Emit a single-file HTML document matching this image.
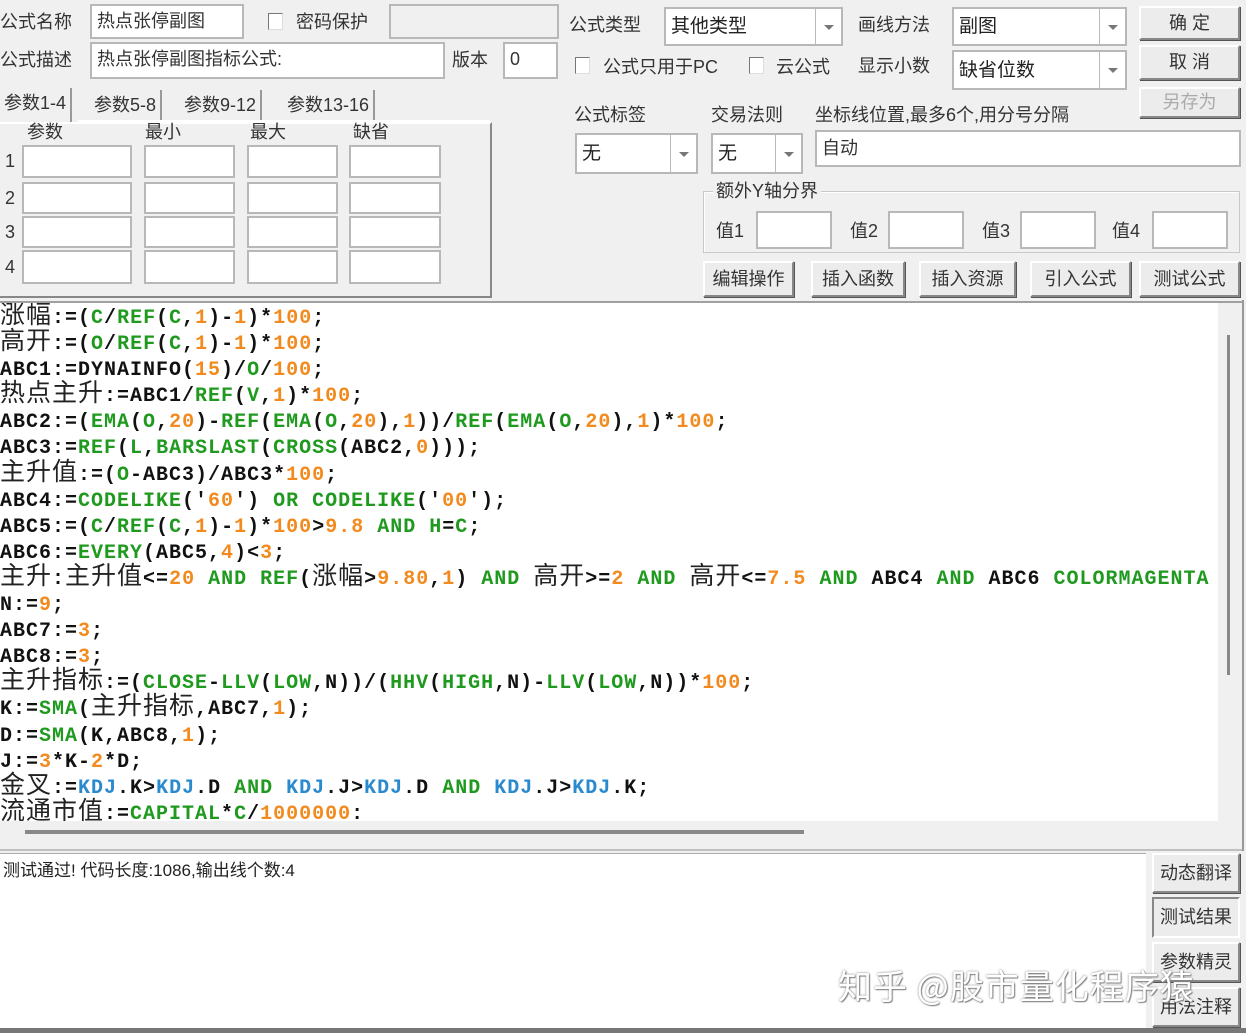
<!DOCTYPE html>
<html><head><meta charset="utf-8">
<style>
*{margin:0;padding:0;box-sizing:border-box}
body{width:1246px;height:1033px;background:#f0f0f0;position:relative;overflow:hidden;font-family:"Liberation Sans","Noto Sans CJK SC",sans-serif;color:#222}
.a{position:absolute}
.l{position:absolute;font-size:18px;line-height:22px;white-space:nowrap;color:#333}
.in{position:absolute;background:#fff;border:2px solid #b8b8b8;font-size:18px;line-height:30px;padding-left:5px;white-space:nowrap;color:#333;overflow:hidden}
.dis{background:#f0f0f0}
.cb{position:absolute;width:15px;height:17px;border:1px solid #777;border-right-color:#ddd;border-bottom-color:#ddd;background:#fff}
.sel{position:absolute;background:#fff;border:2px solid #b8b8b8;font-size:19px;padding-left:5px;white-space:nowrap;color:#222}
.sel .dd{position:absolute;right:0;top:0;bottom:0;width:26px;border-left:1px solid #bbb}
.sel .dd:after{content:"";position:absolute;left:8px;top:50%;margin-top:-2px;border-left:5px solid transparent;border-right:5px solid transparent;border-top:5px solid #777}
.btn{position:absolute;background:#ececec;border:2px solid #888;border-top-color:#fff;border-left-color:#fff;box-shadow:1px 1px 0 #555;font-size:18px;text-align:center;color:#333;white-space:nowrap}
.tab{position:absolute;font-size:18px;top:90px;height:32px;line-height:30px;padding:0 4px;border-right:2px solid #999;color:#333}
#code{position:absolute;left:0;top:303px;width:1218px;height:518px;background:#fff;overflow:hidden;font-family:"Liberation Mono",monospace;font-weight:bold;font-size:20px;letter-spacing:1px;color:#111;padding-top:3px}
#code div{height:26.1px;line-height:26.1px;white-space:nowrap;overflow:visible}
.c{font-family:"Noto Sans CJK SC",sans-serif;font-weight:normal;font-size:25px;line-height:10px;color:#222}
.g{color:#1f9a1f}.o{color:#f28a1e}.b{color:#2a8ad0}
</style></head><body>

<div class="l" style="left:0;top:11px">公式名称</div>
<div class="in" style="left:90px;top:4px;width:154px;height:35px">热点张停副图</div>
<div class="cb" style="left:268px;top:13px"></div>
<div class="l" style="left:296px;top:11px">密码保护</div>
<div class="in dis" style="left:389px;top:4px;width:170px;height:35px"></div>
<div class="l" style="left:0;top:49px">公式描述</div>
<div class="in" style="left:90px;top:42px;width:355px;height:37px">热点张停副图指标公式:</div>
<div class="l" style="left:452px;top:49px">版本</div>
<div class="in" style="left:503px;top:42px;width:55px;height:37px">0</div>

<div class="tab" style="left:0;top:88px;height:34px;border-left:0">参数1-4</div>
<div class="tab" style="left:90px">参数5-8</div>
<div class="tab" style="left:180px">参数9-12</div>
<div class="tab" style="left:283px">参数13-16</div>
<div class="a" style="left:-2px;top:122px;width:494px;height:176px;border:2px solid #fff;border-right-color:#888;border-bottom-color:#888;border-left:0"></div>
<div class="a" style="left:78px;top:120px;width:412px;height:2px;background:#fff"></div>
<div class="l" style="left:27px;top:121px">参数</div>
<div class="l" style="left:145px;top:121px">最小</div>
<div class="l" style="left:250px;top:121px">最大</div>
<div class="l" style="left:353px;top:121px">缺省</div>
<div class="l" style="left:5px;top:150px">1</div>
<div class="l" style="left:5px;top:187px">2</div>
<div class="l" style="left:5px;top:221px">3</div>
<div class="l" style="left:5px;top:256px">4</div>
<div class="in" style="left:22px;top:145px;width:110px;height:33px"></div><div class="in" style="left:144px;top:145px;width:91px;height:33px"></div><div class="in" style="left:247px;top:145px;width:91px;height:33px"></div><div class="in" style="left:349px;top:145px;width:92px;height:33px"></div>
<div class="in" style="left:22px;top:182px;width:110px;height:32px"></div><div class="in" style="left:144px;top:182px;width:91px;height:32px"></div><div class="in" style="left:247px;top:182px;width:91px;height:32px"></div><div class="in" style="left:349px;top:182px;width:92px;height:32px"></div>
<div class="in" style="left:22px;top:216px;width:110px;height:32px"></div><div class="in" style="left:144px;top:216px;width:91px;height:32px"></div><div class="in" style="left:247px;top:216px;width:91px;height:32px"></div><div class="in" style="left:349px;top:216px;width:92px;height:32px"></div>
<div class="in" style="left:22px;top:250px;width:110px;height:34px"></div><div class="in" style="left:144px;top:250px;width:91px;height:34px"></div><div class="in" style="left:247px;top:250px;width:91px;height:34px"></div><div class="in" style="left:349px;top:250px;width:92px;height:34px"></div>

<div class="l" style="left:569px;top:14px">公式类型</div>
<div class="sel" style="left:664px;top:7px;width:179px;height:39px;line-height:35px">其他类型<div class="dd"></div></div>
<div class="l" style="left:858px;top:14px">画线方法</div>
<div class="sel" style="left:952px;top:7px;width:175px;height:39px;line-height:35px">副图<div class="dd"></div></div>
<div class="btn" style="left:1139px;top:6px;width:101px;height:34px;line-height:30px">确 定</div>
<div class="btn" style="left:1139px;top:45px;width:101px;height:35px;line-height:31px">取 消</div>
<div class="btn" style="left:1139px;top:87px;width:101px;height:31px;line-height:27px;color:#aaa">另存为</div>
<div class="cb" style="left:575px;top:57px"></div>
<div class="l" style="left:603px;top:56px">公式只用于PC</div>
<div class="cb" style="left:749px;top:57px"></div>
<div class="l" style="left:776px;top:56px">云公式</div>
<div class="l" style="left:858px;top:55px">显示小数</div>
<div class="sel" style="left:952px;top:50px;width:175px;height:40px;line-height:38px">缺省位数<div class="dd"></div></div>
<div class="l" style="left:574px;top:104px">公式标签</div>
<div class="l" style="left:711px;top:104px">交易法则</div>
<div class="l" style="left:815px;top:104px">坐标线位置,最多6个,用分号分隔</div>
<div class="sel" style="left:575px;top:133px;width:123px;height:41px;line-height:38px">无<div class="dd"></div></div>
<div class="sel" style="left:711px;top:133px;width:92px;height:41px;line-height:38px">无<div class="dd"></div></div>
<div class="in" style="left:815px;top:130px;width:426px;height:37px;line-height:33px">自动</div>
<div class="a" style="left:703px;top:191px;width:537px;height:62px;border:1px solid #c8c8c8;box-shadow:1px 1px 0 #fff inset"></div>
<div class="l" style="left:713px;top:180px;background:#f0f0f0;padding:0 3px">额外Y轴分界</div>
<div class="l" style="left:716px;top:220px">值1</div><div class="in" style="left:756px;top:211px;width:76px;height:38px"></div>
<div class="l" style="left:850px;top:220px">值2</div><div class="in" style="left:888px;top:211px;width:76px;height:38px"></div>
<div class="l" style="left:982px;top:220px">值3</div><div class="in" style="left:1020px;top:211px;width:76px;height:38px"></div>
<div class="l" style="left:1112px;top:220px">值4</div><div class="in" style="left:1152px;top:211px;width:76px;height:38px"></div>
<div class="btn" style="left:703px;top:261px;width:91px;height:36px;line-height:32px">编辑操作</div>
<div class="btn" style="left:811px;top:261px;width:94px;height:36px;line-height:32px">插入函数</div>
<div class="btn" style="left:919px;top:261px;width:97px;height:36px;line-height:32px">插入资源</div>
<div class="btn" style="left:1030px;top:261px;width:101px;height:36px;line-height:32px">引入公式</div>
<div class="btn" style="left:1139px;top:261px;width:101px;height:36px;line-height:32px">测试公式</div>

<div class="a" style="left:0;top:301px;width:1242px;height:2px;background:#a0a0a0"></div>
<div id="code">
<div><span class="c">涨幅</span>:=(<span class="g">C</span>/<span class="g">REF</span>(<span class="g">C</span>,<span class="o">1</span>)-<span class="o">1</span>)*<span class="o">100</span>;</div>
<div><span class="c">高开</span>:=(<span class="g">O</span>/<span class="g">REF</span>(<span class="g">C</span>,<span class="o">1</span>)-<span class="o">1</span>)*<span class="o">100</span>;</div>
<div>ABC1:=DYNAINFO(<span class="o">15</span>)/<span class="g">O</span>/<span class="o">100</span>;</div>
<div><span class="c">热点主升</span>:=ABC1/<span class="g">REF</span>(<span class="g">V</span>,<span class="o">1</span>)*<span class="o">100</span>;</div>
<div>ABC2:=(<span class="g">EMA</span>(<span class="g">O</span>,<span class="o">20</span>)-<span class="g">REF</span>(<span class="g">EMA</span>(<span class="g">O</span>,<span class="o">20</span>),<span class="o">1</span>))/<span class="g">REF</span>(<span class="g">EMA</span>(<span class="g">O</span>,<span class="o">20</span>),<span class="o">1</span>)*<span class="o">100</span>;</div>
<div>ABC3:=<span class="g">REF</span>(<span class="g">L</span>,<span class="g">BARSLAST</span>(<span class="g">CROSS</span>(ABC2,<span class="o">0</span>)));</div>
<div><span class="c">主升值</span>:=(<span class="g">O</span>-ABC3)/ABC3*<span class="o">100</span>;</div>
<div>ABC4:=<span class="g">CODELIKE</span>('<span class="o">60</span>') <span class="g">OR</span> <span class="g">CODELIKE</span>('<span class="o">00</span>');</div>
<div>ABC5:=(<span class="g">C</span>/<span class="g">REF</span>(<span class="g">C</span>,<span class="o">1</span>)-<span class="o">1</span>)*<span class="o">100</span>&gt;<span class="o">9.8</span> <span class="g">AND</span> <span class="g">H</span>=<span class="g">C</span>;</div>
<div>ABC6:=<span class="g">EVERY</span>(ABC5,<span class="o">4</span>)&lt;<span class="o">3</span>;</div>
<div><span class="c">主升</span>:<span class="c">主升值</span>&lt;=<span class="o">20</span> <span class="g">AND</span> <span class="g">REF</span>(<span class="c">涨幅</span>&gt;<span class="o">9.80</span>,<span class="o">1</span>) <span class="g">AND</span> <span class="c">高开</span>&gt;=<span class="o">2</span> <span class="g">AND</span> <span class="c">高开</span>&lt;=<span class="o">7.5</span> <span class="g">AND</span> ABC4 <span class="g">AND</span> ABC6 <span class="g">COLORMAGENTA</span></div>
<div>N:=<span class="o">9</span>;</div>
<div>ABC7:=<span class="o">3</span>;</div>
<div>ABC8:=<span class="o">3</span>;</div>
<div><span class="c">主升指标</span>:=(<span class="g">CLOSE</span>-<span class="g">LLV</span>(<span class="g">LOW</span>,N))/(<span class="g">HHV</span>(<span class="g">HIGH</span>,N)-<span class="g">LLV</span>(<span class="g">LOW</span>,N))*<span class="o">100</span>;</div>
<div>K:=<span class="g">SMA</span>(<span class="c">主升指标</span>,ABC7,<span class="o">1</span>);</div>
<div>D:=<span class="g">SMA</span>(K,ABC8,<span class="o">1</span>);</div>
<div>J:=<span class="o">3</span>*K-<span class="o">2</span>*D;</div>
<div><span class="c">金叉</span>:=<span class="b">KDJ</span>.K&gt;<span class="b">KDJ</span>.D <span class="g">AND</span> <span class="b">KDJ</span>.J&gt;<span class="b">KDJ</span>.D <span class="g">AND</span> <span class="b">KDJ</span>.J&gt;<span class="b">KDJ</span>.K;</div>
<div><span class="c">流通市值</span>:=<span class="g">CAPITAL</span>*<span class="g">C</span>/<span class="o">1000000</span>:</div>
</div>
<div class="a" style="left:1218px;top:303px;width:24px;height:518px;background:#f0f0f0"></div>
<div class="a" style="left:1227px;top:335px;width:3px;height:340px;background:#888"></div>
<div class="a" style="left:25px;top:830px;width:779px;height:4px;background:#888"></div>
<div class="a" style="left:0;top:849px;width:1242px;height:2px;background:#c0c0c0"></div>
<div class="a" style="left:1242px;top:300px;width:2px;height:551px;background:#999"></div>

<div class="a" style="left:0;top:853px;width:1146px;height:175px;background:#fff;border-top:1px solid #aaa"></div>
<div class="l" style="left:3px;top:860px;font-size:17px;color:#222">测试通过! 代码长度:1086,输出线个数:4</div>
<div class="btn" style="left:1152px;top:853px;width:88px;height:40px;line-height:36px">动态翻译</div>
<div class="btn" style="left:1152px;top:897px;width:88px;height:41px;line-height:37px;border-color:#888 #fff #fff #888;box-shadow:none">测试结果</div>
<div class="btn" style="left:1152px;top:942px;width:88px;height:40px;line-height:36px">参数精灵</div>
<div class="btn" style="left:1152px;top:987px;width:88px;height:40px;line-height:36px">用法注释</div>
<div class="a" style="left:0;top:1028px;width:1246px;height:5px;background:#777"></div>
<div class="a" style="left:838px;top:960px;font-size:34px;letter-spacing:1px;color:#fff;text-shadow:0 0 2px #777,1px 1px 1px #888;white-space:nowrap;font-family:'Noto Sans CJK SC',sans-serif">知乎 @股市量化程序猿</div>
</body></html>
